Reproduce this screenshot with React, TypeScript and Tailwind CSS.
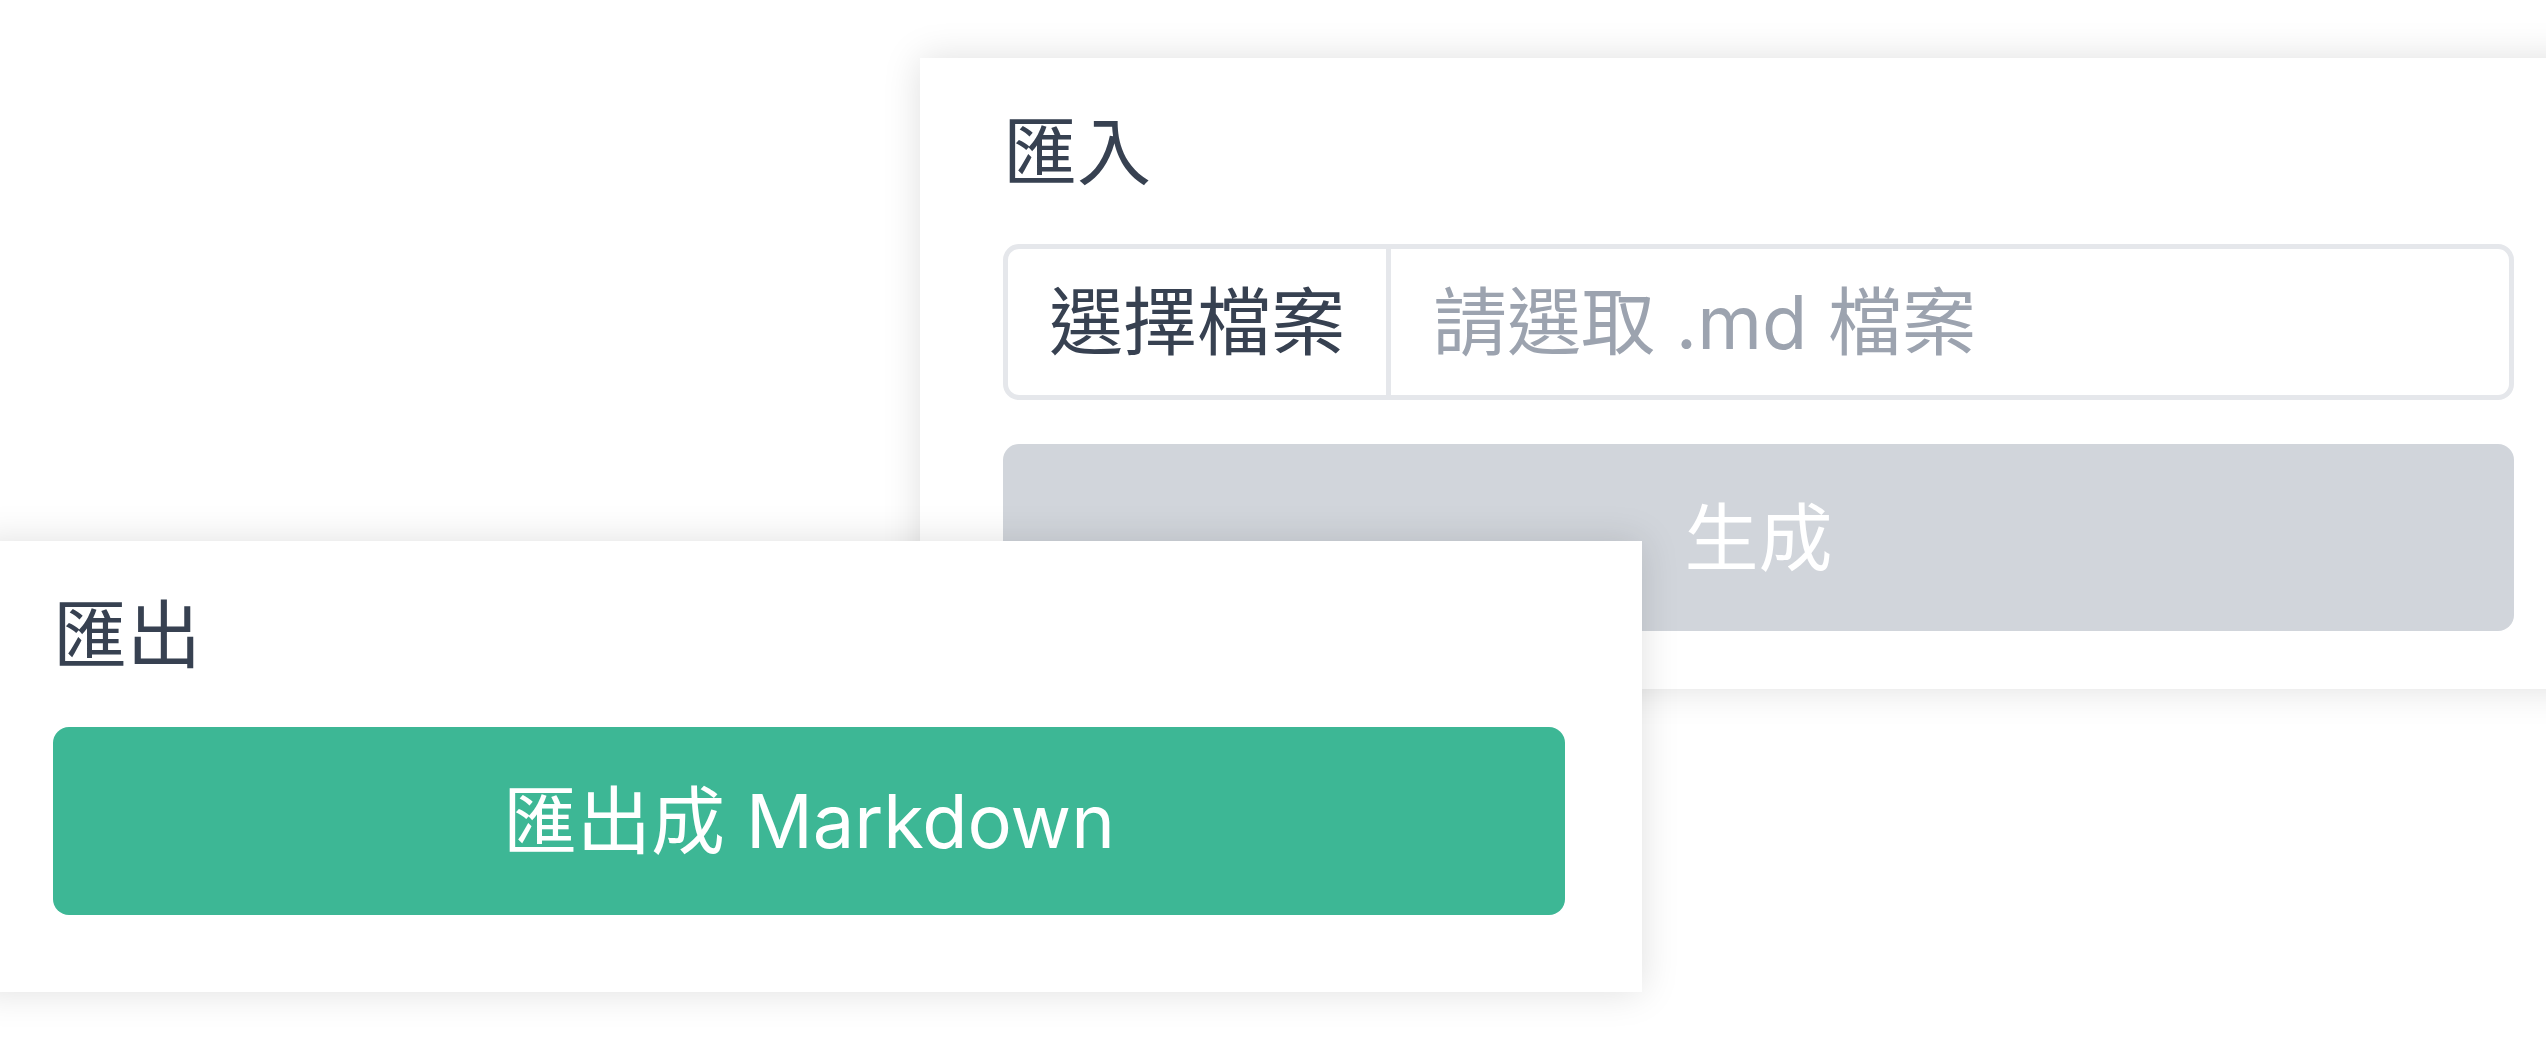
import React from "react";

export default function App() {
  return (
    <div className="relative w-full h-[1040px] overflow-hidden bg-white font-['Inter','Noto_Sans_CJK_TC',sans-serif]">
      {/* Import card */}
      <section className="absolute left-[920px] top-[58px] right-[-51px] bg-white px-[83px] pt-[57px] pb-[58px] shadow-[0_0_36px_rgba(0,0,0,0.13)]">
        <h2 className="text-[74px] leading-none text-[#374151] font-normal">匯入</h2>
        <div className="mt-[55px] flex h-[156px] items-stretch rounded-[16px] border-[5px] border-[#e5e7eb] bg-white">
          <button className="flex items-center border-r-[5px] border-[#e5e7eb] px-[41px] text-[74px] leading-none text-[#374151]">
            選擇檔案
          </button>
          <span className="flex items-center pl-[42px] text-[74px] leading-none text-[#9ca3af]">
            請選取 .md 檔案
          </span>
        </div>
        <button className="mt-[44px] flex h-[187px] w-full items-center justify-center rounded-[16px] bg-[#d1d5db] text-[74px] leading-none text-white">
          生成
        </button>
      </section>

      {/* Export card */}
      <section className="absolute left-[-24px] top-[541px] w-[1666px] bg-white px-[77px] pt-[57px] pb-[77px] shadow-[0_0_36px_rgba(0,0,0,0.13)]">
        <h2 className="text-[74px] leading-none text-[#374151] font-normal">匯出</h2>
        <button className="mt-[55px] flex h-[188px] w-full items-center justify-center rounded-[16px] bg-[#3db795] text-[74px] leading-none text-white">
          匯出成 Markdown
        </button>
      </section>
    </div>
  );
}
